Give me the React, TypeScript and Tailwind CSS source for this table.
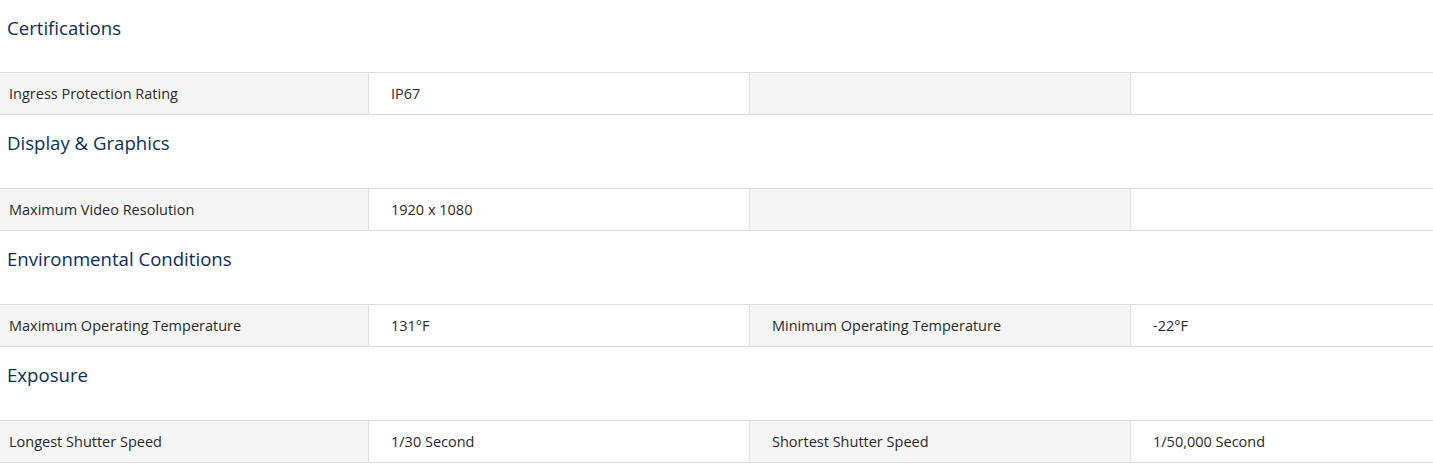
const sections: { title: string; cells: [string, string, string, string] }[] = [
  { title: "Certifications", cells: ["Ingress Protection Rating", "IP67", "", ""] },
  { title: "Display & Graphics", cells: ["Maximum Video Resolution", "1920 x 1080", "", ""] },
  {
    title: "Environmental Conditions",
    cells: ["Maximum Operating Temperature", "131°F", "Minimum Operating Temperature", "-22°F"],
  },
  {
    title: "Exposure",
    cells: ["Longest Shutter Speed", "1/30 Second", "Shortest Shutter Speed", "1/50,000 Second"],
  },
];

export default function App() {
  return (
    <div className="w-[1433px] bg-white font-['Open_Sans',sans-serif] text-[#2a2a2a]">
      {sections.map((s, i) => (
        <div key={s.title}>
          <h3
            className={`flex items-start pl-[7px] text-[18.6px] font-medium text-[#0c2d5b] ${
              i === 0 ? "h-[72px] pt-[14px]" : "h-[73px] pt-[14px]"
            }`}
          >
            {s.title}
          </h3>
          <div className="flex h-[43px] border-y border-[#dedede] text-[14.5px]">
            <div className="flex w-[368px] items-center bg-[#f5f5f5] pl-[9px]">{s.cells[0]}</div>
            <div className="flex w-[381px] items-center border-l border-[#dedede] pl-[22px]">
              {s.cells[1]}
            </div>
            <div className="flex w-[381px] items-center border-l border-[#dedede] bg-[#f5f5f5] pl-[22px]">
              {s.cells[2]}
            </div>
            <div className="flex flex-1 items-center border-l border-[#dedede] pl-[22px]">
              {s.cells[3]}
            </div>
          </div>
        </div>
      ))}
    </div>
  );
}
